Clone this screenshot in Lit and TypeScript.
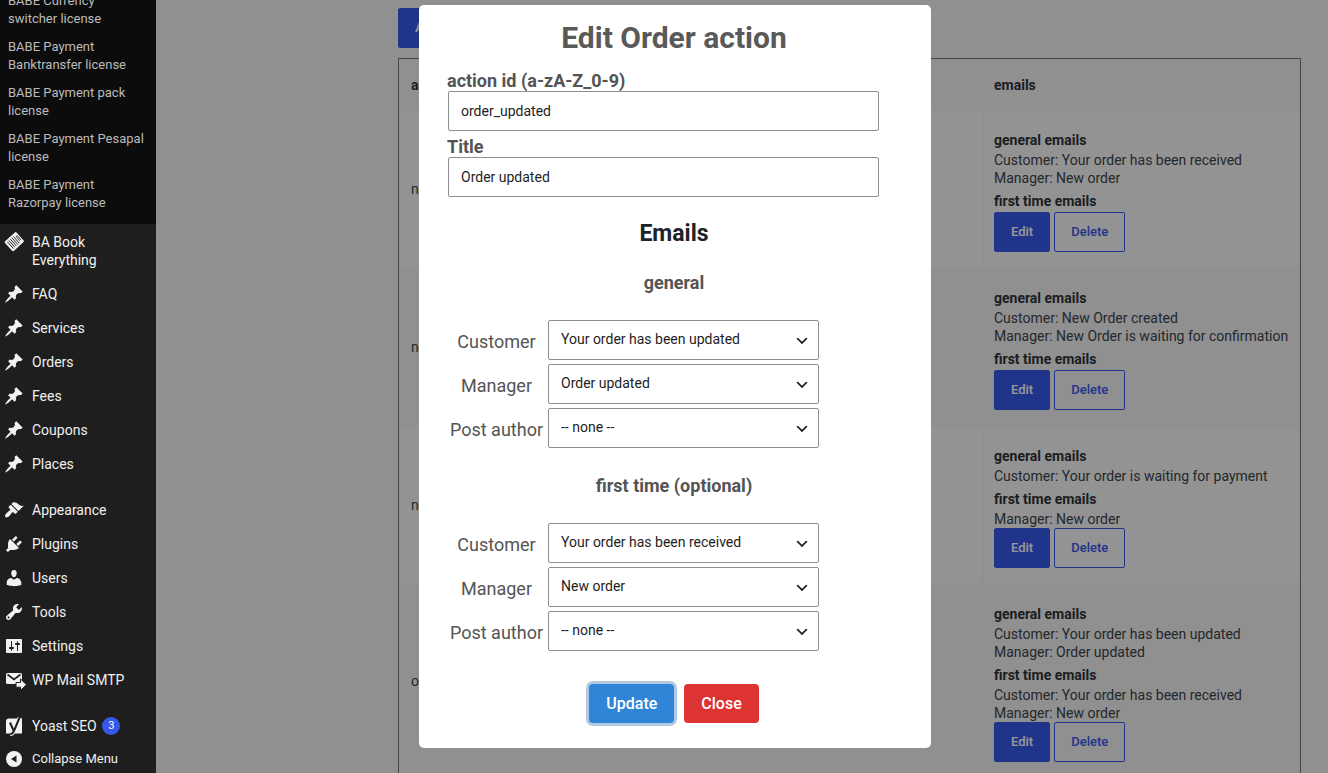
import { LitElement, html, css, svg } from "lit";
import { customElement } from "lit/decorators.js";

const PIN = svg`<path d="M10.44 3.02l1.82-1.82 6.36 6.35-1.83 1.82c-1.05-.68-2.48-.57-3.41.36l-.75.75c-.92.93-1.04 2.35-.35 3.41l-1.83 1.82-2.41-2.41-2.8 2.79c-.42.42-3.38 2.71-3.8 2.29s1.86-3.39 2.28-3.81l2.79-2.79L4.1 9.36l1.83-1.82c1.05.69 2.48.57 3.4-.36l.75-.75c.93-.92 1.05-2.35.36-3.41z"/>`;
const BRUSH = svg`<path d="M14.48 11.06L7.41 3.99l1.5-1.5c.5-.56 2.3-.47 3.51.32 1.21.8 1.43 1.28 2.91 2.1 1.18.64 2.45 1.26 4.45.85zm-.71.71L6.7 4.7 4.93 6.47c-.39.39-.39 1.02 0 1.41l1.06 1.06c.39.39.39 1.03 0 1.42-.6.6-1.43 1.11-2.21 1.69-.35.26-.7.53-1.01.84C1.43 14.23.4 16.08 1.4 17.07c.99 1 2.84-.03 4.18-1.36.31-.31.58-.66.85-1.02.57-.78 1.08-1.61 1.69-2.21.39-.39 1.02-.39 1.41 0l1.06 1.06c.39.39 1.02.39 1.41 0z"/>`;
const PLUG = svg`<path d="M13.11 4.36L9.87 7.6 8 5.73l3.24-3.24c.35-.34 1.05-.2 1.56.32.52.51.66 1.21.31 1.55zm-8 1.77l.91-1.12 9.01 9.01-1.19.84c-.71.71-2.63 1.16-3.82 1.16H6.14L4.9 17.26c-.59.59-1.54.59-2.12 0-.59-.58-.59-1.53 0-2.12l1.24-1.24v-3.88c0-1.13.4-3.19 1.09-3.89zm7.26 3.97l3.24-3.24c.34-.35 1.04-.21 1.55.31.52.51.66 1.21.31 1.55l-3.24 3.25z"/>`;
const USER = svg`<path d="M10 9.25c-2.27 0-2.73-3.44-2.73-3.44C7 4.02 7.82 2 9.97 2c2.16 0 2.98 2.02 2.71 3.81 0 0-.41 3.44-2.68 3.44zm0 2.57L12.72 10c2.39 0 4.52 2.33 4.52 4.53v2.49s-3.65 1.13-7.24 1.13c-3.65 0-7.24-1.13-7.24-1.13v-2.49c0-2.25 1.94-4.48 4.47-4.48z"/>`;
const WRENCH = svg`<path d="M16.68 9.77c-1.34 1.34-3.3 1.67-4.95.99l-5.41 6.52c-.99.99-2.59.99-3.58 0s-.99-2.59 0-3.57l6.52-5.42c-.68-1.65-.35-3.61.99-4.95 1.28-1.28 3.12-1.62 4.72-1.06l-2.89 2.89 2.82 2.82 2.86-2.87c.53 1.58.18 3.39-1.08 4.65zM3.81 16.21c.4.39 1.04.39 1.43 0 .4-.4.4-1.04 0-1.43-.39-.4-1.03-.4-1.43 0-.39.39-.39 1.03 0 1.43z"/>`;
const SLIDERS = svg`<path d="M18 16V4c0-.55-.45-1-1-1H3c-.55 0-1 .45-1 1v12c0 .55.45 1 1 1h14c.55 0 1-.45 1-1zM8 11h1c.55 0 1 .45 1 1s-.45 1-1 1H8v1.5c0 .28-.22.5-.5.5s-.5-.22-.5-.5V13H6c-.55 0-1-.45-1-1s.45-1 1-1h1V5.5c0-.28.22-.5.5-.5s.5.22.5.5V11zm5-2h-1c-.55 0-1-.45-1-1s.45-1 1-1h1V5.5c0-.28.22-.5.5-.5s.5.22.5.5V7h1c.55 0 1 .45 1 1s-.45 1-1 1h-1v5.5c0 .28-.22.5-.5.5s-.5-.22-.5-.5V9z"/>`;
const MAIL = svg`<path d="M3.5 3h13A1.500 1.500 0 0 1 18 4.500V14H3.500A1.500 1.500 0 0 1 2 12.500V4.500A1.500 1.500 0 0 1 3.500 3z"/><path d="M3.500 4.500l6.500 5 6.500-5" fill="none" stroke="#1e1e1e" stroke-width="1.600"/><path d="M12 12.500h4.500V9l6 5.700-6 5.700v-3.200H12z" stroke="#1e1e1e" stroke-width="1"/>`;
const YOAST = svg`<path d="M5 2.500h13v15H2V5.500a3 3 0 0 1 3-3z"/><path d="M6 7l3.300 7.500M15.800 1.500L10 15c-.8 2-1.800 3-3.800 3" fill="none" stroke="#f3f1f1" stroke-width="4"/><path d="M6 6.500l3.500 8M15.800 1L10 14.800c-.8 2-1.800 3.200-3.800 3.200" fill="none" stroke="#1e1e1e" stroke-width="2"/>`;
const COLLAPSE = svg`<circle cx="10" cy="10" r="8"/><path d="M12.500 6.500v7L7 10z" fill="#1e1e1e"/>`;
const BOOK = svg`<g transform="rotate(-42 10.500 9.500)"><rect x="2.500" y="3" width="15.500" height="13" rx="1.200"/><path d="M5 5v9M7 5v9M9 5v9M11 5v9M13 5v9" stroke="#1e1e1e" stroke-width=".9" fill="none"/><path d="M15 7v5h1.500V7z" fill="none" stroke="#1e1e1e" stroke-width=".8"/></g>`;

const LICENSES = [
  "BABE Currency switcher license",
  "BABE Payment Banktransfer license",
  "BABE Payment pack license",
  "BABE Payment Pesapal license",
  "BABE Payment Razorpay license",
];

const GROUPS = [
  [
    { label: "BA Book Everything", icon: BOOK },
    { label: "FAQ", icon: PIN },
    { label: "Services", icon: PIN },
    { label: "Orders", icon: PIN },
    { label: "Fees", icon: PIN },
    { label: "Coupons", icon: PIN },
    { label: "Places", icon: PIN },
  ],
  [
    { label: "Appearance", icon: BRUSH },
    { label: "Plugins", icon: PLUG },
    { label: "Users", icon: USER },
    { label: "Tools", icon: WRENCH },
    { label: "Settings", icon: SLIDERS },
    { label: "WP Mail SMTP", icon: MAIL },
  ],
  [{ label: "Yoast SEO", icon: YOAST, count: 3 }],
];

const ROWS = [
  { id: "new_order", title: "New order", general: ["Customer: Your order has been received", "Manager: New order"], first: [] },
  { id: "new_order_to_confirm", title: "New order to confirm", general: ["Customer: New Order created", "Manager: New Order is waiting for confirmation"], first: [] },
  { id: "new_order_to_pay", title: "New order to pay", general: ["Customer: Your order is waiting for payment"], first: ["Manager: New order"] },
  { id: "order_updated", title: "Order updated", general: ["Customer: Your order has been updated", "Manager: Order updated"], first: ["Customer: Your order has been received", "Manager: New order"] },
];

const icon = (shape: unknown) =>
  html`<svg class="icon" viewBox="0 0 20 20" aria-hidden="true">${shape}</svg>`;

@customElement("admin-menu")
class AdminMenu extends LitElement {
  static styles = css`
    :host {
      display: block;
      flex: none;
      width: 156px;
      height: 100vh;
      overflow: hidden;
      background: #1e1e1e;
      position: relative;
      z-index: 20;
    }
    ul { list-style: none; margin: 0; padding: 0; }
    .sub { margin-top: -13px; padding-bottom: 7px; background: #0c0c0c; }
    .sub a {
      display: block;
      padding: 5px 11px 5px 8px;
      font-size: 13px;
      line-height: 18px;
      color: #bbbbbb;
      text-decoration: none;
    }
    .group { padding: 1px 0 11px; }
    .group:last-of-type { padding-bottom: 0; }
    .item {
      display: flex;
      align-items: flex-start;
      gap: 8px;
      width: 100%;
      box-sizing: border-box;
      padding: 8px 8px 8px 4px;
      border: 0;
      background: none;
      font: 14px/18px Roboto, sans-serif;
      color: #f0f0f1;
      text-align: left;
      text-decoration: none;
    }
    .collapse { padding-top: 7px; font-size: 13px; }
    .icon {
      flex: none;
      width: 20px;
      height: 20px;
      margin: -1px 0;
      fill: #f3f1f1;
      overflow: visible;
    }
    .count {
      display: inline-block;
      vertical-align: top;
      min-width: 18px;
      height: 18px;
      margin-left: 2px;
      border-radius: 9px;
      background: #3858e9;
      color: #fff;
      font-size: 11px;
      text-align: center;
    }
  `;

  render() {
    return html`
      <nav aria-label="Main menu">
        <ul class="sub">
          ${LICENSES.map((name) => html`<li><a href="#">${name}</a></li>`)}
        </ul>
        ${GROUPS.map(
          (group) => html`<ul class="group">
            ${group.map(
              (item: any) => html`<li>
                <a class="item" href="#">${icon(item.icon)}<span>${item.label} ${item.count ? html`<span class="count">${item.count}</span>` : ""}</span></a>
              </li>`
            )}
          </ul>`
        )}
        <button class="item collapse" type="button">${icon(COLLAPSE)}<span>Collapse Menu</span></button>
      </nav>
    `;
  }
}

@customElement("order-actions")
class OrderActions extends LitElement {
  static styles = css`
    :host {
      display: block;
      flex: 1;
      min-width: 0;
      padding: 8px 27px 0 242px;
      font-size: 14px;
      line-height: 18px;
      color: #3c434a;
    }
    .button {
      height: 40px;
      padding: 0 16px;
      border: 1px solid #3858e9;
      border-radius: 2px;
      background: none;
      color: #3858e9;
      font: 500 13px/18px Roboto, sans-serif;
    }
    .primary { background: #3858e9; color: #fff; }
    .add { display: block; margin-bottom: 10px; }
    .table {
      width: 100%;
      border: 1px solid #777;
      border-spacing: 2px;
    }
    th { height: 48px; box-sizing: border-box; color: #2c3338; }
    th, td { padding: 15px 8px 15px 10px; text-align: left; vertical-align: middle; }
    .emails { width: 314px; }
    tbody tr:nth-child(odd) td { background: #f6f6f6; }
    .heading { margin: 5px 0 2px; font-weight: 700; color: #2c3338; }
    .buttons { display: flex; gap: 4px; }
  `;

  render() {
    return html`
      <button class="button primary add" type="button">Add action</button>
      <table class="table">
        <thead>
          <tr><th>action id</th><th>title</th><th class="emails">emails</th></tr>
        </thead>
        <tbody>
          ${ROWS.map(
            (row) => html`<tr>
              <td>${row.id}</td>
              <td>${row.title}</td>
              <td>
                <div class="heading">general emails</div>
                ${row.general.map((line) => html`<div>${line}</div>`)}
                <div class="heading">first time emails</div>
                ${row.first.map((line) => html`<div>${line}</div>`)}
                <div class="buttons">
                  <button class="button primary" type="button">Edit</button>
                  <button class="button" type="button">Delete</button>
                </div>
              </td>
            </tr>`
          )}
        </tbody>
      </table>
    `;
  }
}

const RECIPIENTS = [
  {
    title: "general",
    key: "general",
    rows: [["Customer", "Your order has been updated"], ["Manager", "Order updated"], ["Post author", "-- none --"]],
  },
  {
    title: "first time (optional)",
    key: "first",
    rows: [["Customer", "Your order has been received"], ["Manager", "New order"], ["Post author", "-- none --"]],
  },
];

@customElement("edit-dialog")
class EditDialog extends LitElement {
  static styles = css`
    :host {
      position: fixed;
      inset: 0;
      z-index: 10;
      display: flex;
      justify-content: center;
      align-items: flex-start;
      padding: 5px 0 0 22px;
      background: rgba(0, 0, 0, 0.4);
      font-size: 18px;
      line-height: 22px;
      color: #545454;
    }
    .dialog {
      box-sizing: border-box;
      width: 512px;
      max-width: 100%;
      padding: 13px 30px 25px 28px;
      border-radius: 5px;
      background: #fff;
    }
    h1, h2, h3 { margin: 0; text-align: center; font-weight: 700; }
    h1 { font-size: 30px; line-height: 40px; color: #595959; }
    h2 { margin-top: 22px; font-size: 23px; line-height: 30px; color: #1d2327; }
    h3 { font-size: 18px; line-height: 22px; margin: 23px 0 26px; }
    .section + .section { margin-top: 27px; }
    .fields { display: flex; flex-direction: column; margin-right: 22px; padding-top: 7px; }
    .field-label { margin-top: 6px; line-height: 20px; font-weight: 700; }
    .control {
      box-sizing: border-box;
      height: 40px;
      margin-left: 1px;
      padding: 0 12px;
      border: 1px solid #8c8f94;
      border-radius: 2px;
      background-color: #fff;
      font: 14px/20px Roboto, sans-serif;
      color: #1e1e1e;
    }
    .recipients {
      display: grid;
      grid-template-columns: 99px 272px;
      gap: 4px 1px;
      align-items: center;
      text-align: center;
      white-space: nowrap;
    }
    .recipient { padding-top: 4px; }
    .select {
      margin: 0;
      appearance: none;
      width: 271px;
      padding: 0 30px 2px 12px;
      background-image: url("data:image/svg+xml,%3Csvg width='20' height='20' xmlns='http://www.w3.org/2000/svg'%3E%3Cpath d='M5 6l5 5 5-5 2 1-7 7-7-7 2-1z' fill='%231e1e1e'/%3E%3C/svg%3E");
      background-repeat: no-repeat;
      background-position: right 8px top 55%;
      background-size: 16px 16px;
      justify-self: end;
    }
    .actions { display: flex; justify-content: center; gap: 10px; margin-top: 33px; }
    .action {
      height: 39px;
      padding: 0 17px;
      border: 0;
      border-radius: 4px;
      color: #fff;
      font: 500 16px/20px Roboto, sans-serif;
    }
    .update { background: #3085d6; box-shadow: 0 0 0 3px rgba(100, 150, 200, 0.5); }
    .close { background: #dd3333; }
  `;

  render() {
    return html`
      <form class="dialog" role="dialog" aria-labelledby="title">
        <h1 id="title">Edit Order action</h1>
        <div class="fields">
          <label class="field-label" for="action-id">action id (a-zA-Z_0-9)</label>
          <input class="control" id="action-id" type="text" .value=${"order_updated"} />
          <label class="field-label" for="action-title">Title</label>
          <input class="control" id="action-title" type="text" .value=${"Order updated"} />
        </div>
        <h2>Emails</h2>
        ${RECIPIENTS.map(
          (section) => html`<section class="section">
            <h3>${section.title}</h3>
            <div class="recipients">
              ${section.rows.map(
                ([label, value], i) => html`
                  <label class="recipient" for=${section.key + i}>${label}</label>
                  <select class="control select" id=${section.key + i}><option>${value}</option></select>
                `
              )}
            </div>
          </section>`
        )}
        <div class="actions">
          <button class="action update" type="button">Update</button>
          <button class="action close" type="button">Close</button>
        </div>
      </form>
    `;
  }
}

@customElement("app-root")
class AppRoot extends LitElement {
  static styles = css`
    :host {
      display: flex;
      height: 100vh;
      overflow: hidden;
      background: #f0f0f1;
      font-family: Roboto, sans-serif;
    }
  `;

  render() {
    return html`
      <admin-menu></admin-menu>
      <order-actions></order-actions>
      <edit-dialog></edit-dialog>
    `;
  }
}
